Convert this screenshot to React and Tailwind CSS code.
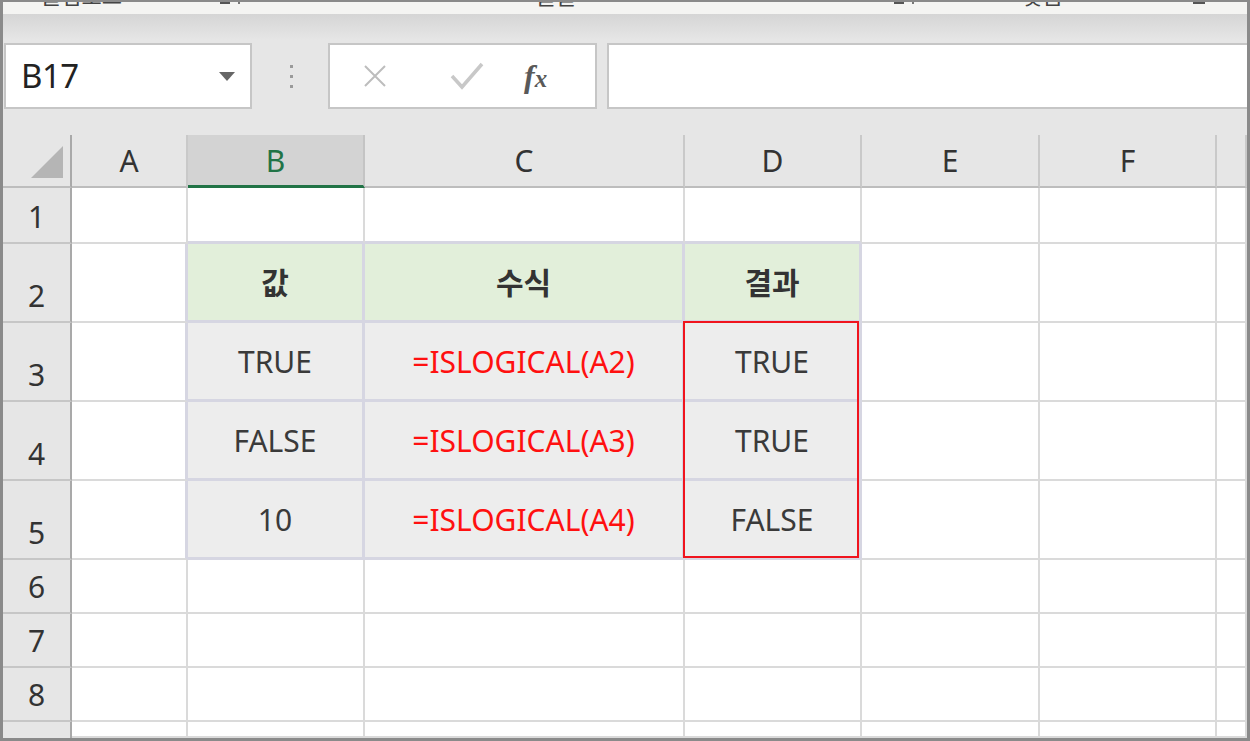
import React from "react";

const LAV = "border-[#d6d6e2]";

function RowHead({ n }) {
  return (
    <div className="bg-[#e6e6e6] border-r-2 border-b-2 border-r-[#a9a9a9] border-b-[#c6c6c6] flex items-end justify-center pb-[10px] text-[30px] leading-[30px] text-[#333]">
      {n}
    </div>
  );
}

function Blank({ extra = "" }) {
  return <div className={`bg-white border-r-2 border-b-2 border-[#dadada] ${extra}`} />;
}

function ColHead({ label, sel }) {
  if (sel)
    return (
      <div className="bg-[#d3d3d3] border-r-2 border-r-[#c4c4c4] border-b-[3px] border-b-[#217346] flex items-center justify-center text-[30px] text-[#217346]">
        {label}
      </div>
    );
  return (
    <div className="bg-[#e6e6e6] border-r-2 border-b-2 border-r-[#c9c9c9] border-b-[#bdbdbd] flex items-center justify-center text-[30px] text-[#333]">
      {label}
    </div>
  );
}

function THead({ children }) {
  return (
    <div className={`bg-[#e2efda] border-r-[3px] border-b-[3px] ${LAV} flex items-center justify-center text-[30px] font-bold text-[#333]`}>
      {children}
    </div>
  );
}

function TCell({ children, red }) {
  return (
    <div className={`bg-[#ededed] border-r-[3px] border-b-[3px] ${LAV} flex items-center justify-center text-[30px] ${red ? "text-[#ff1010]" : "text-[#3a3a3a]"}`}>
      {children}
    </div>
  );
}

function TCellFlex({ children }) {
  return (
    <div className={`flex-1 bg-[#ededed] border-r-[3px] border-b-[3px] ${LAV} flex items-center justify-center text-[30px] text-[#3a3a3a]`}>
      {children}
    </div>
  );
}

export default function App() {
  const font = "font-['Noto_Sans','Noto_Sans_CJK_KR',sans-serif]";
  return (
    <div className={`w-[1250px] h-[741px] overflow-hidden bg-[#e6e6e6] border-x-[3px] border-b-[3px] border-t-2 border-[#8a8a8a] flex flex-col ${font}`}>
      {/* ribbon remnant */}
      <div className="h-[12px] shrink-0 bg-[#f4f4f2] overflow-hidden flex items-start text-[22px] leading-[22px] text-[#444] font-['Noto_Sans_CJK_KR',sans-serif]">
        <span className="ml-[38px] -mt-[19px]">클립보드</span>
        <div className="ml-[98px] w-[10px] h-[2px] bg-[#555]" />
        <div className="ml-[8px] w-[2px] h-[2px] bg-[#777]" />
        <span className="ml-[296px] -mt-[19px]">글꼴</span>
        <div className="ml-[318px] w-[10px] h-[2px] bg-[#555]" />
        <div className="ml-[8px] w-[2px] h-[2px] bg-[#777]" />
        <span className="ml-[108px] -mt-[19px]">맞춤</span>
        <div className="ml-[130px] w-[12px] h-[2px] bg-[#555]" />
      </div>
      <div className="h-[26px] shrink-0 bg-gradient-to-b from-[#d5d5d5] to-[#e6e6e6]" />

      {/* formula bar */}
      <div className="mt-[3px] h-[66px] shrink-0 flex">
        <div className="ml-[1px] w-[248px] bg-white border-2 border-[#c6c6c6] flex items-center justify-between pl-[15px] pr-[15px]">
          <span className="text-[33px] text-[#222] tracking-[-0.5px]">B17</span>
          <svg width="16" height="9" viewBox="0 0 16 9"><path d="M0 0 L16 0 L8 9 Z" fill="#666" /></svg>
        </div>
        <div className="w-[76px] flex flex-col items-center justify-center gap-[7px] pl-[2px]">
          <div className="w-[3px] h-[3px] bg-[#9a9a9a]" />
          <div className="w-[3px] h-[3px] bg-[#9a9a9a]" />
          <div className="w-[3px] h-[3px] bg-[#9a9a9a]" />
        </div>
        <div className="w-[269px] bg-white border-2 border-[#c6c6c6] flex items-center">
          <svg className="ml-[33px]" width="24" height="24" viewBox="0 0 24 24">
            <path d="M2 2 L22 22 M22 2 L2 22" stroke="#bdbdbd" strokeWidth="2" fill="none" />
          </svg>
          <svg className="ml-[63px]" width="34" height="28" viewBox="0 0 34 28">
            <path d="M2 14 L12 25 L32 2" stroke="#c8c8c8" strokeWidth="3.5" fill="none" />
          </svg>
          <span className="ml-[40px] font-['Liberation_Serif',serif] italic font-bold text-[#595959] leading-none">
            <span className="text-[32px]">f</span>
            <span className="text-[25px]">x</span>
          </span>
        </div>
        <div className="ml-[10px] flex-1 bg-white border-2 border-r-0 border-[#c6c6c6]" />
      </div>
      <div className="h-[26px] shrink-0" />

      {/* grid */}
      <div className="flex-1 grid grid-cols-[69px_116px_177px_320px_177px_178px_177px_30px] grid-rows-[53px_56px_79px_79px_79px_79px_54px_54px_54px_16px] overflow-hidden">
        <div className="bg-[#e6e6e6] border-r-2 border-b-2 border-r-[#a9a9a9] border-b-[#bdbdbd] flex items-end justify-end pr-[7px] pb-[8px]">
          <svg width="32" height="32" viewBox="0 0 32 32"><path d="M32 0 L32 32 L0 32 Z" fill="#b5b5b5" /></svg>
        </div>
        <ColHead label="A" />
        <ColHead label="B" sel />
        <ColHead label="C" />
        <ColHead label="D" />
        <ColHead label="E" />
        <ColHead label="F" />
        <ColHead label="" />

        <RowHead n="1" />
        <Blank />
        <Blank extra="border-b-[3px] border-b-[#d6d6e2]" />
        <Blank extra="border-b-[3px] border-b-[#d6d6e2]" />
        <Blank extra="border-b-[3px] border-b-[#d6d6e2]" />
        <Blank />
        <Blank />
        <Blank />

        <RowHead n="2" />
        <Blank extra="border-r-[3px] border-r-[#d6d6e2]" />
        <THead>값</THead>
        <THead>수식</THead>
        <THead>결과</THead>
        <Blank />
        <Blank />
        <Blank />

        <RowHead n="3" />
        <Blank extra="border-r-[3px] border-r-[#d6d6e2]" />
        <TCell>TRUE</TCell>
        <TCell red>=ISLOGICAL(A2)</TCell>
        <div className="row-span-3 relative flex flex-col">
          <TCellFlex>TRUE</TCellFlex>
          <TCellFlex>TRUE</TCellFlex>
          <TCellFlex>FALSE</TCellFlex>
          <div className="absolute -left-[2px] -top-[2px] right-[3px] bottom-[2px] border-2 border-[#f0141e]" />
        </div>
        <Blank />
        <Blank />
        <Blank />

        <RowHead n="4" />
        <Blank extra="border-r-[3px] border-r-[#d6d6e2]" />
        <TCell>FALSE</TCell>
        <TCell red>=ISLOGICAL(A3)</TCell>
        <Blank />
        <Blank />
        <Blank />

        <RowHead n="5" />
        <Blank extra="border-r-[3px] border-r-[#d6d6e2]" />
        <TCell>10</TCell>
        <TCell red>=ISLOGICAL(A4)</TCell>
        <Blank />
        <Blank />
        <Blank />

        {["6", "7", "8"].map((n) => (
          <React.Fragment key={n}>
            <RowHead n={n} />
            <Blank />
            <Blank />
            <Blank />
            <Blank />
            <Blank />
            <Blank />
            <Blank />
          </React.Fragment>
        ))}

        <div className="overflow-hidden">
          <div className="h-[54px] bg-[#e6e6e6] border-r-2 border-r-[#a9a9a9] flex items-start justify-center pt-[12px] text-[30px] leading-[30px] text-[#333]">
            9
          </div>
        </div>
        <Blank />
        <Blank />
        <Blank />
        <Blank />
        <Blank />
        <Blank />
        <Blank />
      </div>
    </div>
  );
}
